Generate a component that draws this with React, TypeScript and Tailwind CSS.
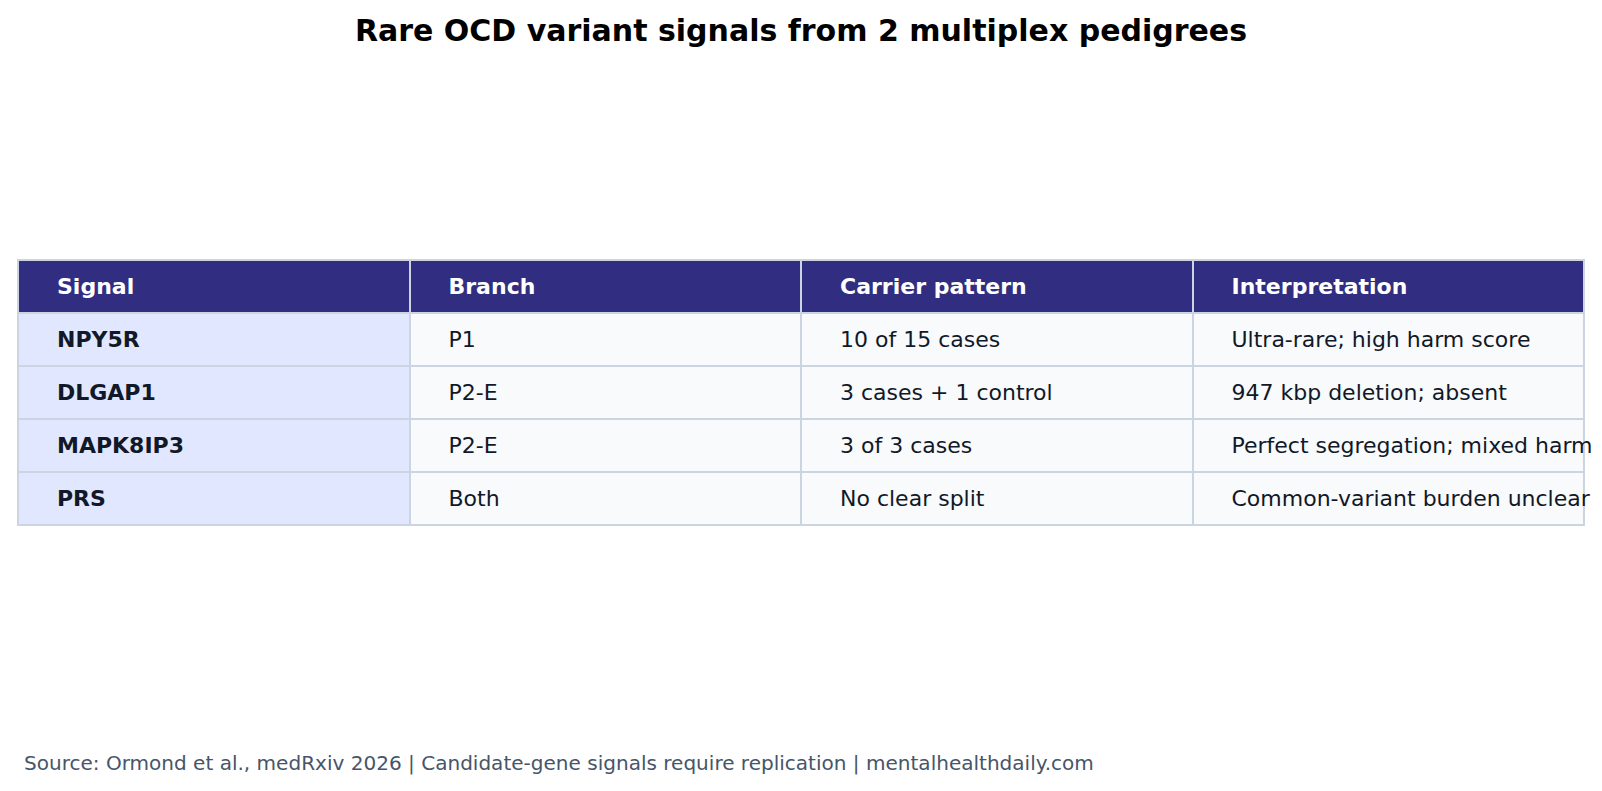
import React from "react";

const rows = [
  ["NPY5R", "P1", "10 of 15 cases", "Ultra-rare; high harm score"],
  ["DLGAP1", "P2-E", "3 cases + 1 control", "947 kbp deletion; absent"],
  ["MAPK8IP3", "P2-E", "3 of 3 cases", "Perfect segregation; mixed harm"],
  ["PRS", "Both", "No clear split", "Common-variant burden unclear"],
];

const headers = ["Signal", "Branch", "Carrier pattern", "Interpretation"];

export default function App() {
  return (
    <div
      className="w-[1602px] h-[791px] bg-white overflow-hidden flex flex-col"
      style={{ fontFamily: '"DejaVu Sans", Verdana, sans-serif' }}
    >
      <div className="pt-[13px] text-center text-[30px] font-bold text-black leading-[35px]">
        Rare OCD variant signals from 2 multiplex pedigrees
      </div>
      <div className="mt-[211px] ml-[17px] w-[1568px] bg-[#cbd5e1] p-[2px] grid grid-cols-4 gap-[2px]">
        {headers.map((h) => (
          <div
            key={h}
            className="h-[51px] bg-[#312e81] text-white font-bold text-[22px] flex items-center pl-[38px] whitespace-nowrap"
          >
            {h}
          </div>
        ))}
        {rows.map((r) =>
          r.map((c, i) => (
            <div
              key={r[0] + i}
              className={
                "h-[51px] flex items-center pl-[38px] text-[22px] whitespace-nowrap text-[#111827] " +
                (i === 0 ? "bg-[#e0e7ff] font-bold" : "bg-[#f8fafc]")
              }
            >
              {c}
            </div>
          ))
        )}
      </div>
      <div className="mt-[226px] pl-[24px] text-[20.05px] text-[#475569] leading-[23px] whitespace-nowrap">
        Source: Ormond et al., medRxiv 2026 | Candidate-gene signals require replication | mentalhealthdaily.com
      </div>
    </div>
  );
}
